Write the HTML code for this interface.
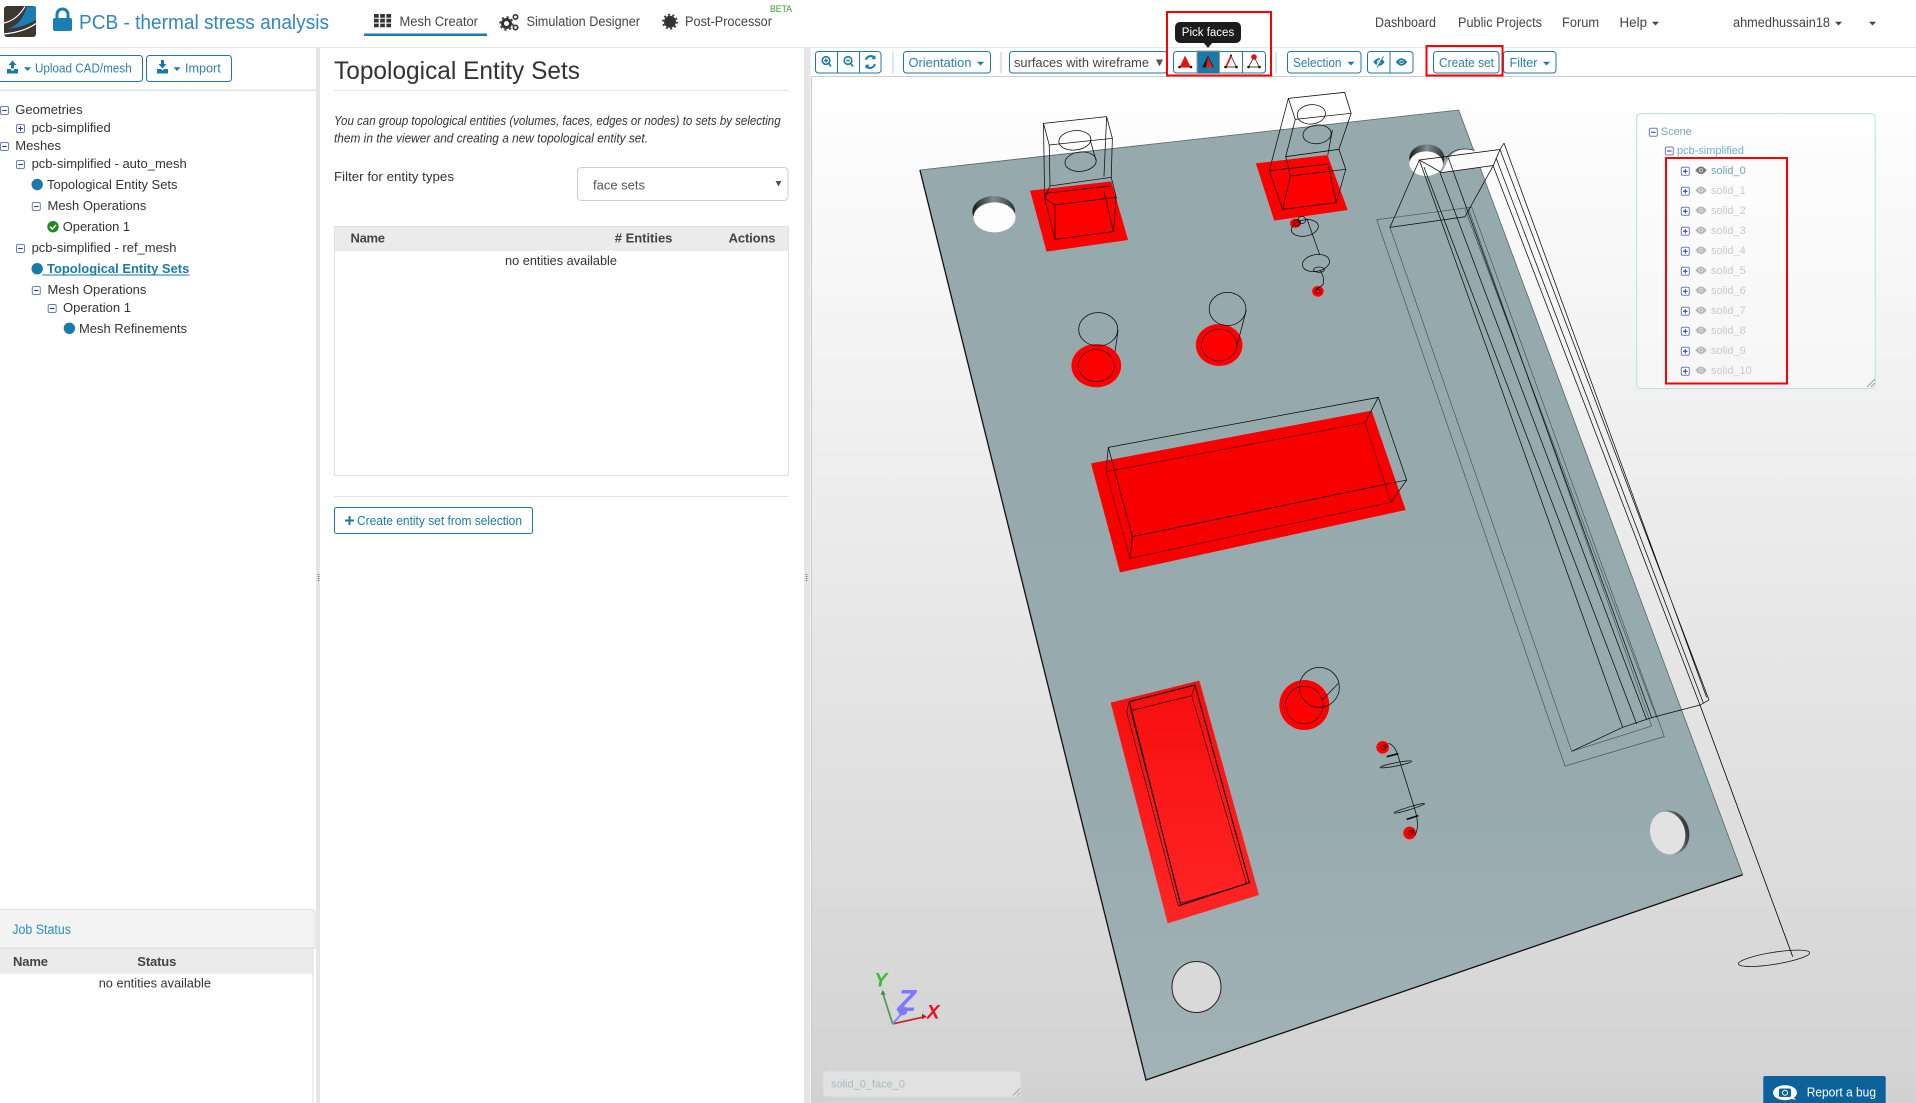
<!DOCTYPE html>
<html lang="en"><head><meta charset="utf-8"><title>PCB - thermal stress analysis</title>
<style>
html,body{margin:0;padding:0;background:#fff;width:1916px;height:1103px;overflow:hidden}
svg{position:absolute;left:0;top:0;display:block}
text{font-family:"Liberation Sans",Arial,sans-serif;font-size:13px;fill:#333;white-space:pre}
.nav{fill:#444;font-size:13.5px}
.b{fill:#2b7fae;font-size:12.5px}
.tr{fill:#333;font-size:13px}
.th{font-weight:bold;fill:#444;font-size:13px}
.w *{vector-effect:non-scaling-stroke}
.k{fill:none;stroke:#0a0a0a;stroke-width:.75}
.t{fill:none;stroke:#46575b;stroke-width:.7}
.btn{fill:#fff;stroke:#1a7ba8;stroke-width:1}
.sc{font-size:11px;fill:#c9c9c9}
</style></head><body>
<svg width="1916" height="1103" viewBox="0 0 1916 1103" xmlns="http://www.w3.org/2000/svg">
<defs>
<linearGradient id="bg" x1="0" y1="0" x2="0" y2="1"><stop offset="0" stop-color="#fff"/><stop offset="1" stop-color="#d2d2d2"/></linearGradient>
<linearGradient id="bd" x1="0" y1="0" x2="0" y2="1"><stop offset="0" stop-color="#96a9ad"/><stop offset=".7" stop-color="#97aaae"/><stop offset="1" stop-color="#a2b3b7"/></linearGradient>
<linearGradient id="rd" x1="0" y1="0" x2="0" y2="1"><stop offset="0" stop-color="#f70e0e"/><stop offset="1" stop-color="#ff2525"/></linearGradient>
<linearGradient id="cr" x1="0" y1="0" x2="1" y2="0"><stop offset="0" stop-color="#141c1d"/><stop offset=".5" stop-color="#7f8e90"/><stop offset="1" stop-color="#2a3334"/></linearGradient>
<g id="mn"><rect x="-4" y="-4" width="8" height="8" rx="1.5" fill="#fff" stroke="#6c7fb8"/><path d="M-2.3 0H2.3" stroke="#2a3a90"/></g>
<g id="pl"><rect x="-4" y="-4" width="8" height="8" rx="1.5" fill="#fff" stroke="#6c7fb8"/><path d="M-2.3 0H2.3M0 -2.3V2.3" stroke="#2a30b0"/></g>
<g id="ey"><path d="M-5.7 0Q0 -7.6 5.7 0Q0 7.6 -5.7 0Z"/><circle r="2.1" fill="#e8e8e8"/><circle r="1.3"/></g>
<g id="car"><path d="M-3.5 -1.8H3.5L0 2Z"/></g>
</defs>

<!-- viewer -->
<rect x="812" y="76" width="1104" height="1027" fill="url(#bg)"/>
<rect x="811" y="76" width="1105" height="1" fill="#ccc"/>
<rect x="811" y="76" width="1" height="1027" fill="#ccc"/>

<!-- navbar -->
<rect x="0" y="47" width="1916" height="1" fill="#e7e7e7"/>
<rect x="4" y="6" width="32" height="31" rx="3" fill="#3c3733"/>
<path d="M27 6.500H36V20Q24 27 8 29Q22 24 27 6.500Z" fill="#1a7db4"/>
<path d="M4 23Q17 20 25 6.500M4 34Q24 32 36 23.500" fill="none" stroke="#fff" stroke-width="1.200"/>
<rect x="53" y="18" width="19" height="13" rx="2" fill="#1a7db4"/>
<path d="M57 19V14.500a5.500 5.500 0 0 1 11 0V19" fill="none" stroke="#1a7db4" stroke-width="3"/>
<text x="79" y="29" textLength="250" lengthAdjust="spacingAndGlyphs" style="font-size:20px;fill:#3088bb">PCB - thermal stress analysis</text>
<g fill="#333"><path d="M374 14h4.700v3.700h-4.700zM380.200 14h4.700v3.700h-4.700zM386.400 14h4.700v3.700h-4.700zM374 18.800h4.700v3.700h-4.700zM380.200 18.800h4.700v3.700h-4.700zM386.400 18.800h4.700v3.700h-4.700zM374 23.600h4.700v3.700h-4.700zM380.200 23.600h4.700v3.700h-4.700zM386.400 23.600h4.700v3.700h-4.700z"/></g>
<text class="nav" x="399.500" y="26" textLength="78.500" lengthAdjust="spacingAndGlyphs">Mesh Creator</text>
<rect x="364" y="33.500" width="123" height="2.500" fill="#1a7ba8"/>
<circle cx="506.500" cy="23.500" r="4" fill="none" stroke="#333" stroke-width="3"/>
<circle cx="506.500" cy="23.500" r="6.400" fill="none" stroke="#333" stroke-width="1.600" stroke-dasharray="2.200 2.800"/>
<circle cx="515.500" cy="17" r="2.200" fill="none" stroke="#333" stroke-width="1.600"/>
<circle cx="515.500" cy="27.500" r="2.200" fill="none" stroke="#333" stroke-width="1.600"/>
<text class="nav" x="526.500" y="26" textLength="113.500" lengthAdjust="spacingAndGlyphs">Simulation Designer</text>
<circle cx="670" cy="21.700" r="6" fill="#333"/><circle cx="670" cy="21.700" r="7" fill="none" stroke="#333" stroke-width="1.800" stroke-dasharray="2 2.400"/>
<text class="nav" x="685" y="26" textLength="87" lengthAdjust="spacingAndGlyphs">Post-Processor</text>
<text x="770" y="12" textLength="22" lengthAdjust="spacingAndGlyphs" style="font-size:9.500px;fill:#2f9e2f">BETA</text>
<text class="nav" x="1375" y="27" textLength="61" lengthAdjust="spacingAndGlyphs">Dashboard</text>
<text class="nav" x="1458" y="27" textLength="84" lengthAdjust="spacingAndGlyphs">Public Projects</text>
<text class="nav" x="1562" y="27" textLength="37" lengthAdjust="spacingAndGlyphs">Forum</text>
<text class="nav" x="1619.500" y="27" textLength="27.500" lengthAdjust="spacingAndGlyphs">Help</text>
<use href="#car" x="1655.500" y="23.500" fill="#444"/>
<text class="nav" x="1733" y="27" textLength="97" lengthAdjust="spacingAndGlyphs">ahmedhussain18</text>
<use href="#car" x="1838.500" y="23.500" fill="#444"/>
<use href="#car" x="1872.500" y="23.500" fill="#444"/>

<!-- toolbar -->
<rect class="btn" x="815.500" y="51.500" width="65.500" height="21.500" rx="3"/>
<path d="M837.500 52V73M859.500 52V73" stroke="#1a7ba8"/>
<g fill="none" stroke="#1a7ba8" stroke-width="1.600">
<circle cx="826" cy="60.500" r="3.800"/><path d="M828.800 63.500L831 66.500M824.200 60.500h3.600M826 58.700v3.600"/>
<circle cx="848" cy="60.500" r="3.800"/><path d="M850.800 63.500L853 66.500M846.200 60.500h3.600"/>
<path d="M866 60a4.800 4.800 0 0 1 8.400-2.200M874.800 64a4.800 4.800 0 0 1-8.400 2.200" stroke-width="2"/>
</g>
<path d="M875.500 55v4.200h-4.200zM865.500 69v-4.200h4.200z" fill="#1a7ba8"/>
<rect x="892.500" y="52" width="1" height="21" fill="#b3cfdc"/>
<rect class="btn" x="903.500" y="51.500" width="87" height="21.500" rx="3"/>
<text class="b" x="908.500" y="67" textLength="63" lengthAdjust="spacingAndGlyphs">Orientation</text>
<use href="#car" x="980.500" y="63.500" fill="#1a7ba8"/>
<rect x="1000.500" y="52" width="1" height="21" fill="#d4bfa8"/>
<rect class="btn" x="1009.500" y="51.500" width="157.500" height="21.500" rx="3"/>
<text x="1014" y="67" textLength="135" lengthAdjust="spacingAndGlyphs" style="font-size:13px;fill:#444">surfaces with wireframe</text>
<path d="M1156 59.500h7l-3.500 7z" fill="#555"/>

<rect class="btn" x="1173.500" y="51.500" width="92" height="21.500" rx="3"/>
<rect x="1197" y="51" width="22.500" height="22.500" fill="#1a7ba8" stroke="#9a9a9a"/>
<path d="M1242.500 52V73" stroke="#1a7ba8"/>
<path d="M1179.500 67.500L1185 55.500L1191 67.500Z" fill="#e81010"/>
<path d="M1202 67.500L1208 55.500L1214 67.500Z" fill="#1a1a2a"/>
<path d="M1208 57L1213 67.500H1206Z" fill="#e02020"/>
<path d="M1225.500 67L1231 56L1236.500 67Z" fill="#fff" stroke="#444" stroke-width=".9"/>
<path d="M1231 56L1226 67" stroke="#e02020" stroke-width="1.800"/>
<path d="M1248.500 67L1254 57L1259.500 67Z" fill="#fff" stroke="#444" stroke-width=".9"/>
<circle cx="1254" cy="57" r="2.800" fill="#e81010"/>
<g fill="#111"><circle cx="1179.500" cy="67" r="1.300"/><circle cx="1191" cy="67" r="1.300"/><circle cx="1225.500" cy="67" r="1.300"/><circle cx="1236.500" cy="67" r="1.300"/><circle cx="1231" cy="55.500" r="1"/><circle cx="1248.500" cy="67" r="1.300"/><circle cx="1259.500" cy="67" r="1.300"/></g>

<rect x="1275.500" y="52" width="1" height="21" fill="#b3cfdc"/>
<rect class="btn" x="1287.500" y="51.500" width="73.500" height="21.500" rx="3"/>
<text class="b" x="1293" y="67" textLength="48.500" lengthAdjust="spacingAndGlyphs">Selection</text>
<use href="#car" x="1351" y="63.500" fill="#1a7ba8"/>
<rect class="btn" x="1367.500" y="51.500" width="45.500" height="21.500" rx="3"/>
<path d="M1390 52V73" stroke="#1a7ba8"/>
<use href="#ey" x="1379" y="62" fill="#1a7ba8"/><path d="M1376 67.500L1382.500 56.500" stroke="#fff" stroke-width="1.800"/><path d="M1377 67.500L1383.500 56.500" stroke="#1a7ba8"/>
<use href="#ey" x="1401.500" y="62" fill="#1a7ba8"/>
<rect class="btn" x="1433.500" y="51.500" width="65.500" height="21.500" rx="3"/>
<text class="b" x="1439" y="67" textLength="55" lengthAdjust="spacingAndGlyphs">Create set</text>
<rect class="btn" x="1503.500" y="51.500" width="52.500" height="21.500" rx="3"/>
<text class="b" x="1509.500" y="67" textLength="28" lengthAdjust="spacingAndGlyphs">Filter</text>
<use href="#car" x="1546.500" y="63.500" fill="#1a7ba8"/>

<path d="M1208 48l-4.500-5.500h9z" fill="#1c1c1c"/>
<rect x="1175" y="22" width="66" height="21" rx="5" fill="#1c1c1c"/>
<text x="1208" y="36" text-anchor="middle" style="font-size:11.500px;fill:#fff">Pick faces</text>
<rect x="1167" y="12" width="104" height="63.500" fill="none" stroke="#f00" stroke-width="2"/>
<rect x="1426.500" y="46" width="76" height="29.500" fill="none" stroke="#f00" stroke-width="2"/>

<!-- left panel -->
<rect class="btn" x="-2" y="55.500" width="144.500" height="26" rx="3"/>
<rect class="btn" x="146.500" y="55.500" width="85" height="26" rx="3"/>
<g fill="#1a7ba8">
<path d="M12.500 60.500l4 4.500h-2.500v3.500h-3V65H8.500zM7 69h4v1.500h3V69h4v4.500H7z"/>
<path d="M162.500 68.500l4-4.500H164v-4h-3v4h-2.500zM157 69h4l1.500 1.500L164 69h4v4.500h-11z"/>
</g>
<use href="#car" x="27.500" y="69" fill="#1a7ba8"/><use href="#car" x="177" y="69" fill="#1a7ba8"/>
<text class="b" x="35" y="72.500" textLength="96.700" lengthAdjust="spacingAndGlyphs">Upload CAD/mesh</text>
<text class="b" x="185" y="72.500" textLength="35.700" lengthAdjust="spacingAndGlyphs">Import</text>
<rect x="0" y="89.500" width="316" height="1.500" fill="#e5e5e5"/>
<rect x="316" y="48" width="4" height="1055" fill="#e5e5e5"/>
<rect x="804" y="48" width="6.500" height="1055" fill="#e5e5e5"/>
<path d="M318.500 574v8M806.500 574v8" stroke="#777" stroke-width="1.600" stroke-dasharray="1 1"/>

<use href="#mn" x="4.500" y="110.500"/><text class="tr" x="15.300" y="114" textLength="67.300" lengthAdjust="spacingAndGlyphs">Geometries</text>
<use href="#pl" x="20.500" y="128.500"/><text class="tr" x="31.600" y="132" textLength="79.100" lengthAdjust="spacingAndGlyphs">pcb-simplified</text>
<use href="#mn" x="4.500" y="146.500"/><text class="tr" x="15.300" y="150" textLength="45.700" lengthAdjust="spacingAndGlyphs">Meshes</text>
<use href="#mn" x="20.500" y="164.500"/><text class="tr" x="31.600" y="168" textLength="155.100" lengthAdjust="spacingAndGlyphs">pcb-simplified - auto_mesh</text>
<circle cx="37.200" cy="184.500" r="5.700" fill="#1a7ba8"/><text class="tr" x="47" y="189" textLength="130.500" lengthAdjust="spacingAndGlyphs">Topological Entity Sets</text>
<use href="#mn" x="36.300" y="206.500"/><text class="tr" x="47.500" y="210" textLength="98.900" lengthAdjust="spacingAndGlyphs">Mesh Operations</text>
<circle cx="53" cy="226.700" r="5.700" fill="#1e8a1e"/><path d="M50 226.700l2.200 2.300 3.800-4" fill="none" stroke="#fff" stroke-width="1.500"/>
<text class="tr" x="62.800" y="231" textLength="67.200" lengthAdjust="spacingAndGlyphs">Operation 1</text>
<use href="#mn" x="20.500" y="248.500"/><text class="tr" x="31.600" y="252" textLength="144.900" lengthAdjust="spacingAndGlyphs">pcb-simplified - ref_mesh</text>
<circle cx="37.200" cy="268.700" r="5.700" fill="#1a7ba8"/><text x="47" y="273" textLength="142.300" lengthAdjust="spacingAndGlyphs" style="font-weight:bold;font-size:13px;fill:#1a7ba8">Topological Entity Sets</text>
<rect x="42" y="274.500" width="147.300" height="1" fill="#1a7ba8"/>
<use href="#mn" x="36.300" y="290.500"/><text class="tr" x="47.500" y="294" textLength="98.900" lengthAdjust="spacingAndGlyphs">Mesh Operations</text>
<use href="#mn" x="52.200" y="308.500"/><text class="tr" x="63" y="312" textLength="68" lengthAdjust="spacingAndGlyphs">Operation 1</text>
<circle cx="69.400" cy="328.300" r="5.700" fill="#1a7ba8"/><text class="tr" x="79" y="333" textLength="108" lengthAdjust="spacingAndGlyphs">Mesh Refinements</text>

<!-- job status -->
<path d="M-2 909.500H312a3 3 0 0 1 3 3V948H-2z" fill="#f3f3f3" stroke="#ddd"/>
<rect x="0" y="947.500" width="315" height="1.500" fill="#ddd"/>
<text x="12.300" y="934" textLength="58.700" lengthAdjust="spacingAndGlyphs" style="font-size:13.500px;fill:#2a8fc0">Job Status</text>
<rect x="0" y="949" width="312.500" height="24.700" fill="#ebebeb"/>
<rect x="312.500" y="949" width="1" height="154" fill="#ddd"/>
<text class="th" x="13" y="966" textLength="35">Name</text>
<text class="th" x="137.300" y="966" textLength="39">Status</text>
<text x="98.700" y="987.700" textLength="112.300" lengthAdjust="spacingAndGlyphs">no entities available</text>

<!-- centre panel -->
<text x="334" y="79" textLength="246" lengthAdjust="spacingAndGlyphs" style="font-size:25px;fill:#333">Topological Entity Sets</text>
<rect x="334" y="90" width="455" height="1" fill="#e5e5e5"/>
<text x="334" y="125" textLength="446.600" lengthAdjust="spacingAndGlyphs" style="font-style:italic">You can group topological entities (volumes, faces, edges or nodes) to sets by selecting</text>
<text x="334" y="142.700" textLength="314" lengthAdjust="spacingAndGlyphs" style="font-style:italic">them in the viewer and creating a new topological entity set.</text>
<text x="334" y="181" textLength="120" lengthAdjust="spacingAndGlyphs">Filter for entity types</text>
<rect x="577.500" y="167.500" width="210.500" height="33" rx="4" fill="#fff" stroke="#ccc"/>
<text x="593" y="189.700" textLength="52" lengthAdjust="spacingAndGlyphs" style="font-size:13px;fill:#555">face sets</text>
<path d="M775.500 181h6l-3 5.500z" fill="#555"/>
<rect x="334.500" y="226.500" width="454" height="249" fill="#fff" stroke="#e2e2e2"/>
<rect x="335" y="227" width="453" height="24" fill="#ebebeb"/>
<text class="th" x="350.500" y="242.700" textLength="34.500">Name</text>
<text class="th" x="614.800" y="242.700" textLength="57.600">#&#160;Entities</text>
<text class="th" x="728.600" y="242.700" textLength="46.900">Actions</text>
<text x="505" y="265" textLength="112" lengthAdjust="spacingAndGlyphs">no entities available</text>
<rect x="334" y="496" width="455" height="1" fill="#e5e5e5"/>
<rect class="btn" x="334.500" y="507.500" width="198" height="26" rx="2"/>
<path d="M345 520.500h9M349.500 516v9" stroke="#1a7ba8" stroke-width="2"/>
<text x="357" y="525" textLength="165" lengthAdjust="spacingAndGlyphs" style="font-size:12.500px;fill:#1a7ba8">Create entity set from selection</text>

<!-- board -->
<polygon points="919.900,170 1458.700,110 1742.700,874.700 1146,1080" fill="url(#bd)"/>
<path d="M919.900 170L1458.700 110L1742.700 874.700" fill="none" stroke="#556668" stroke-width=".8"/>
<path d="M1742.700 874.700L1146 1080L919.900 170" fill="none" stroke="#111" stroke-width="1.300"/>

<!-- top part (zoom-4 coordinates) -->
<g class="w" transform="translate(900 80) scale(.38265 .33333)">
<ellipse cx="245" cy="395" rx="56" ry="47" fill="url(#cr)"/>
<ellipse cx="247" cy="412" rx="55" ry="45" fill="#fdfdfd"/>
<ellipse cx="1377" cy="235" rx="46" ry="42" fill="url(#cr)"/>
<ellipse cx="1375" cy="251" rx="44" ry="37" fill="#fbfbfb"/>
<polygon points="340,332 552,304 596,480 383,515" fill="#f00"/>
<polygon points="930,250 1117,225 1170,390 978,422" fill="#f00"/>
<circle cx="1033" cy="430" r="14" fill="#f00"/>
<ellipse cx="1092" cy="634" rx="15" ry="16" fill="#f00"/>
<ellipse cx="513" cy="857" rx="65" ry="65" fill="#f00"/>
<ellipse cx="834" cy="795" rx="61" ry="63" fill="#f00"/>
<g class="k">
<path d="M375 130L540 110L555 175L390 195ZM390 195L392 318L552 292L555 175M375 130L378 355L405 375M540 110L533 290M378 355L392 318M378 340L550 318M405 375L565 352L558 455L405 478ZM552 292L565 352M378 355L405 478M533 335L558 455"/>
<ellipse cx="457" cy="181" rx="42" ry="29" transform="rotate(-8 457 181)"/>
<ellipse cx="472" cy="245" rx="41" ry="29" transform="rotate(-8 472 245)"/>
<path d="M497 180L512 240"/>
<path d="M1015 55L1162 37L1179 100L1033 118ZM1033 118L1008 230L1147 208L1165 268L1020 288L1008 230M1015 55L965 272L1120 252M1130 150L1118 225M1179 100L1147 208M1020 288L1000 388L1140 368L1165 268M965 272L1000 388M1120 258L1140 368"/>
<ellipse cx="1075" cy="103" rx="37" ry="29" transform="rotate(-8 1075 103)"/>
<ellipse cx="1090" cy="163" rx="37" ry="28" transform="rotate(-8 1090 163)"/>
<ellipse cx="1058" cy="444" rx="36" ry="24" transform="rotate(-15 1058 444)"/>
<path d="M1063 415L1097 525"/>
<ellipse cx="1087" cy="549" rx="36" ry="25" transform="rotate(-15 1087 549)"/>
<ellipse cx="1095" cy="569" rx="14" ry="8"/>
<ellipse cx="1038" cy="428" rx="9" ry="9"/>
<ellipse cx="1050" cy="420" rx="10" ry="11"/>
<path d="M1097 570Q1110 590 1106 612Q1100 622 1088 626"/>
<ellipse cx="1092" cy="634" rx="6" ry="7"/>
<ellipse cx="513" cy="857" rx="47" ry="48" stroke-width=".6"/>
<ellipse cx="518" cy="748" rx="51" ry="50"/>
<path d="M570 750L562 815"/>
<ellipse cx="834" cy="795" rx="46" ry="48" stroke-width=".6"/>
<ellipse cx="856" cy="687" rx="48" ry="50"/>
<path d="M905 690L880 800"/>
</g>
</g>

<!-- big centre connector (zoom-5 coordinates) -->
<g class="w" transform="translate(1050 380) scale(.33333)">
<polygon points="123,250 965,92 1067,390 210,577" fill="#f80000"/>
<polygon points="168,275 945,128 1023,367 240,535" fill="#f80000" stroke="#3a0000" stroke-width=".6"/>
<g class="k">
<path d="M175 202L985 52L1070 300L247 470Z"/>
<path d="M175 202L168 275M985 52L945 128M1070 300L1023 367M247 470L240 535"/>
</g>
</g>

<!-- lower connector + circle + small parts (zoom-6 coordinates) -->
<g class="w" transform="translate(1090 660) scale(.33333)">
<polygon points="62,128 328,62 507,705 233,790" fill="url(#rd)"/>
<circle cx="643" cy="135" r="75" fill="#f00"/>
<circle cx="878" cy="262" r="19" fill="#f00"/>
<circle cx="959" cy="519" r="19" fill="#f00"/>
<g class="k">
<path d="M118 125L315 75L478 668L272 735Z" stroke-width="1.100"/>
<path d="M110 155L118 125M110 155L265 738L478 668M122 152L305 107L470 672L272 730ZM315 75L305 107" stroke-width=".6"/>
<circle cx="643" cy="135" r="56" stroke-width=".6"/>
<circle cx="688" cy="82" r="60"/>
<path d="M745 70L695 122"/>
<path d="M895 250Q915 255 925 290L975 450Q990 500 975 525"/>
<circle cx="880" cy="262" r="7" stroke-width=".6"/><circle cx="886" cy="258" r="5" stroke-width=".6"/>
<circle cx="961" cy="519" r="7" stroke-width=".6"/><circle cx="967" cy="515" r="5" stroke-width=".6"/>
<ellipse cx="918" cy="313" rx="48" ry="5" transform="rotate(-11 918 313)"/>
<ellipse cx="958" cy="445" rx="48" ry="4" transform="rotate(-17 958 445)"/>
<path d="M890 290L925 281M950 478L985 467" stroke-width="1.600"/>
</g>
</g>

<!-- long connector (zoom-7 coordinates) -->
<g class="w" transform="translate(1360 120) scale(.33333 .42088)">
<path d="M258 105Q275 68 325 70Q385 74 400 100L400 108L245 125Z" fill="#fafafa"/>
<path d="M258 92Q282 60 345 72" fill="none" stroke="#222" stroke-width=".7"/>
<g class="t">
<path d="M50 237L335 207L913 1465L615 1535Z"/>
<path d="M90 255L635 1500M315 212L890 1420M325 210L875 1440M635 1500L875 1440"/>
</g>
<g class="k">
<path d="M178 95L90 255L315 230L400 108L245 125L178 95L420 70L400 108M420 70L432 55"/>
<path d="M178 95L788 1443M192 112L830 1435M240 125L860 1425M265 90L875 1420M400 110L1020 1390M420 70L1047 1378M432 55L1040 1372M408 90L1030 1385"/>
<path d="M635 1500L788 1443L875 1420L1020 1390L1047 1378"/>
</g>
</g>
<path d="M1700 705L1792.700 956.700" stroke="#000" stroke-width=".8" fill="none"/>

<!-- lower right (zoom-10 coordinates) -->
<g class="w" transform="translate(1600 780) scale(.33333)">
<ellipse cx="213" cy="157" rx="54" ry="66" transform="rotate(-16 213 157)" fill="url(#cr)"/>
<ellipse cx="203" cy="159" rx="52" ry="65" transform="rotate(-16 203 159)" fill="#e2e2e2"/>
<ellipse cx="522" cy="535" rx="108" ry="18" transform="rotate(-9 522 535)" fill="none" stroke="#111" stroke-width=".8"/>
</g>

<!-- bottom hole -->
<ellipse cx="1196.500" cy="987" rx="24.500" ry="25.500" fill="#d9d9d9" stroke="#222"/>

<!-- axes -->
<g transform="translate(810 940) scale(.33333)">
<path d="M248 252L218 158" stroke="#4a9a4a" stroke-width="5" fill="none"/>
<path d="M218 150l9 14h-15z" fill="#3f8a3f"/>
<path d="M248 252L345 230" stroke="#c8202a" stroke-width="5" fill="none"/>
<path d="M350 230l-14 -9v17z" fill="#b51f25"/>
<path d="M248 252L280 215" stroke="#8080ff" stroke-width="6" fill="none"/>
<circle cx="278" cy="212" r="14" fill="#7a7aff"/>
<text x="193" y="139" style="font-size:58px;font-weight:bold;font-style:italic;fill:#3db83d">Y</text>
<text x="262" y="213" style="font-size:92px;font-weight:bold;font-style:italic;fill:#7a7aff">Z</text>
<text x="350" y="235" style="font-size:58px;font-weight:bold;font-style:italic;fill:#e8101c">X</text>
</g>

<!-- scene tree -->
<rect x="1636.700" y="113.500" width="238.500" height="275" rx="4" fill="#fff" fill-opacity=".35" stroke="#bcdce8"/>
<use href="#mn" x="1653.300" y="132.300"/><text x="1661" y="135" textLength="30.700" lengthAdjust="spacingAndGlyphs" style="font-size:11px;fill:#7ba3b6">Scene</text>
<use href="#mn" x="1669.300" y="151"/><text x="1677" y="154" textLength="67" lengthAdjust="spacingAndGlyphs" style="font-size:11px;fill:#6fb0cc">pcb-simplified</text>
<use href="#pl" x="1685.300" y="171.300"/><use href="#ey" x="1701" y="170.300" fill="#777"/><text x="1711" y="174" textLength="34.700" lengthAdjust="spacingAndGlyphs" style="font-size:11px;fill:#6aa7c4">solid_0</text>
<use href="#pl" x="1685.300" y="191.300"/><use href="#ey" x="1701" y="190.300" fill="#b9b9b9"/><text class="sc" x="1711" y="194" textLength="34.700" lengthAdjust="spacingAndGlyphs">solid_1</text>
<use href="#pl" x="1685.300" y="211.300"/><use href="#ey" x="1701" y="210.300" fill="#b9b9b9"/><text class="sc" x="1711" y="214" textLength="34.700" lengthAdjust="spacingAndGlyphs">solid_2</text>
<use href="#pl" x="1685.300" y="231.300"/><use href="#ey" x="1701" y="230.300" fill="#b9b9b9"/><text class="sc" x="1711" y="234" textLength="34.700" lengthAdjust="spacingAndGlyphs">solid_3</text>
<use href="#pl" x="1685.300" y="251.300"/><use href="#ey" x="1701" y="250.300" fill="#b9b9b9"/><text class="sc" x="1711" y="254" textLength="34.700" lengthAdjust="spacingAndGlyphs">solid_4</text>
<use href="#pl" x="1685.300" y="271.300"/><use href="#ey" x="1701" y="270.300" fill="#b9b9b9"/><text class="sc" x="1711" y="274" textLength="34.700" lengthAdjust="spacingAndGlyphs">solid_5</text>
<use href="#pl" x="1685.300" y="291.300"/><use href="#ey" x="1701" y="290.300" fill="#b9b9b9"/><text class="sc" x="1711" y="294" textLength="34.700" lengthAdjust="spacingAndGlyphs">solid_6</text>
<use href="#pl" x="1685.300" y="311.300"/><use href="#ey" x="1701" y="310.300" fill="#b9b9b9"/><text class="sc" x="1711" y="314" textLength="34.700" lengthAdjust="spacingAndGlyphs">solid_7</text>
<use href="#pl" x="1685.300" y="331.300"/><use href="#ey" x="1701" y="330.300" fill="#b9b9b9"/><text class="sc" x="1711" y="334" textLength="34.700" lengthAdjust="spacingAndGlyphs">solid_8</text>
<use href="#pl" x="1685.300" y="351.300"/><use href="#ey" x="1701" y="350.300" fill="#b9b9b9"/><text class="sc" x="1711" y="354" textLength="34.700" lengthAdjust="spacingAndGlyphs">solid_9</text>
<use href="#pl" x="1685.300" y="371.300"/><use href="#ey" x="1701" y="370.300" fill="#b9b9b9"/><text class="sc" x="1711" y="374" textLength="40.700" lengthAdjust="spacingAndGlyphs">solid_10</text>
<rect x="1666" y="158" width="121" height="225.500" fill="none" stroke="#f00" stroke-width="2"/>
<path d="M1867 387L1875 379M1871 387L1875 383" stroke="#888" stroke-width=".8"/>

<!-- bottom widgets -->
<rect x="823" y="1071" width="198" height="26" rx="4" fill="#e1e1e1" stroke="#c9dbe0"/>
<text x="831" y="1087.700" textLength="74" lengthAdjust="spacingAndGlyphs" style="font-size:11px;fill:#a9b9c0">solid_0_face_0</text>
<path d="M1013 1095.500L1020 1088.500M1017 1095.500L1020 1092.500" stroke="#999" stroke-width=".8"/>
<path d="M1763.300 1103V1078a2 2 0 0 1 2-2H1883.700a2 2 0 0 1 2 2V1103Z" fill="#0c639c"/>
<ellipse cx="1785" cy="1092.700" rx="12" ry="7.500" fill="#fff"/>
<path d="M1792 1096l4 4-6-1.500z" fill="#fff"/>
<rect x="1779" y="1088.500" width="12" height="8.500" rx="1.500" fill="#0c639c"/><circle cx="1785" cy="1092.700" r="2.500" fill="none" stroke="#fff"/>
<text x="1806.700" y="1096.700" textLength="69.300" lengthAdjust="spacingAndGlyphs" style="font-size:12.500px;fill:#fff">Report a bug</text>
</svg>
</body></html>
